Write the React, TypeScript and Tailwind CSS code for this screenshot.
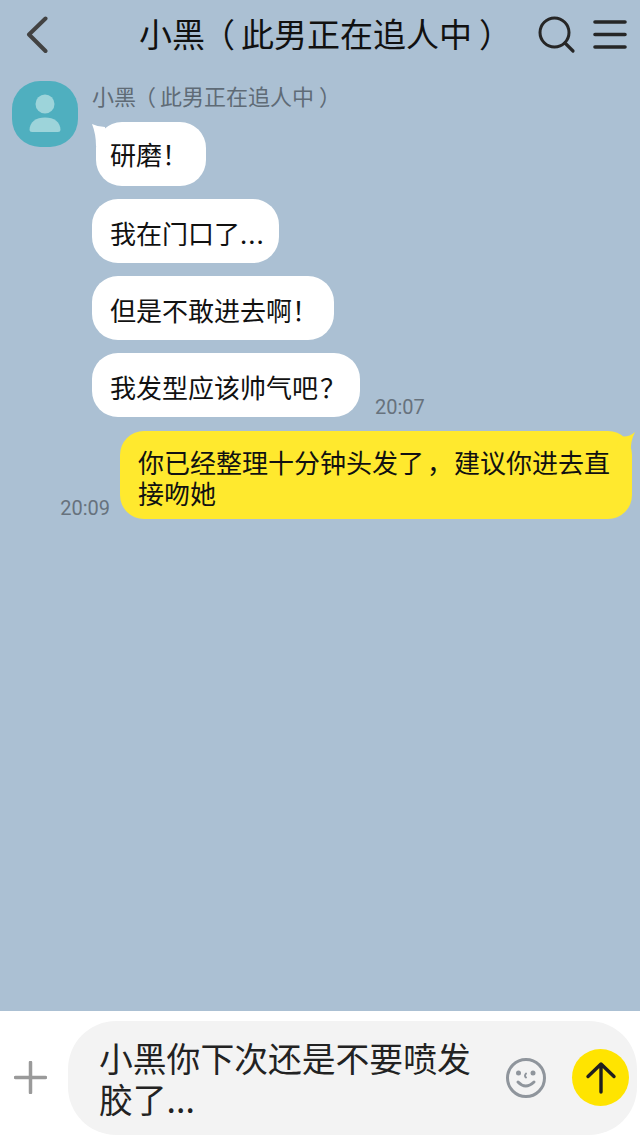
import type { ReactNode } from "react";

const cjk = "font-['Noto_Sans_CJK_SC','Roboto',sans-serif] [text-spacing-trim:space-all]";

const Incoming = ({ children, first, time }: { children: ReactNode; first?: boolean; time?: string }) => (
  <div className="flex items-end">
    <div
      className={
        first
          ? `${cjk} relative ml-1 rounded-[26px] bg-white h-16 pl-[14px] pr-[18px] pb-[2px] flex items-center text-[26px] text-[#111]`
          : `${cjk} relative rounded-[26px] bg-white h-16 pl-[18px] pr-[16px] pt-[2px] flex items-center text-[26px] text-[#111]`
      }
    >
      {first && (
        <svg className="absolute left-[-4px] top-0" width="16" height="26" viewBox="0 0 16 26">
          <path d="M0 2 Q6 5 13 5 L13 24 L4 24 Q4 12 0 2 Z" fill="#fff" />
        </svg>
      )}
      <span className="relative whitespace-nowrap">{children}</span>
    </div>
    {time && <span className="ml-[15px] text-[20px] leading-5 text-[#67727d]">{time}</span>}
  </div>
);

export default function App() {
  return (
    <div className="font-['Roboto','Noto_Sans_CJK_SC',sans-serif] w-[640px] h-[1144px] flex flex-col bg-[#abc0d3] overflow-hidden">
      <header className="h-[70px] shrink-0 flex items-center relative">
        <svg className="ml-[26px]" width="22" height="38" viewBox="0 0 22 38" fill="none">
          <path d="M19.5 2.5 L3 18.5 L19.5 35" stroke="#424242" strokeWidth="4" strokeLinecap="round" strokeLinejoin="round" />
        </svg>
        <h1 className={`${cjk} ml-[91px] pb-[4px] text-[33px] leading-10 font-normal text-[#111] whitespace-nowrap`}>
          小黑<span className="ml-[-3px] mr-[6px]">（</span>此男正在追人中<span className="ml-[7px]">）</span>
        </h1>
        <svg className="absolute left-[538px] top-[16px]" width="38" height="38" viewBox="0 0 38 38" fill="none">
          <circle cx="16.5" cy="16.5" r="14.5" stroke="#262626" strokeWidth="3" />
          <path d="M27 27 L35 35" stroke="#262626" strokeWidth="3.2" strokeLinecap="round" />
        </svg>
        <svg className="absolute left-[593px] top-[19px]" width="34" height="32" viewBox="0 0 34 32" fill="none">
          <path d="M2 3 H32 M2 15.5 H32 M2 28 H32" stroke="#262626" strokeWidth="3.6" strokeLinecap="round" />
        </svg>
      </header>

      <main className="flex-1 flex flex-col px-3 pt-[11px]">
        <div className="flex gap-[14px]">
          <div className="w-[66px] h-[66px] rounded-[28px] bg-[#4fafbf] flex items-center justify-center shrink-0">
            <svg width="36" height="40" viewBox="0 0 36 40">
              <circle cx="18" cy="10" r="9.5" fill="#9dd4da" />
              <path d="M2.5 36 C2.5 28 9 23.500 18 23.500 C27 23.500 33.500 28 33.500 36 Q33.500 38 31 38 H5 Q2.500 38 2.500 36 Z" fill="#9dd4da" />
            </svg>
          </div>
          <div className="flex flex-col">
            <div className={`${cjk} text-[22px] leading-[30px] h-[30px] -mt-[1px] text-[#5f6b76] whitespace-nowrap`}>
              小黑<span className="ml-[-2px] mr-[4px]">（</span>此男正在追人中<span className="ml-[5px]">）</span>
            </div>
            <div className="flex flex-col gap-[13px] mt-[12px]">
              <Incoming first>研磨！</Incoming>
              <Incoming>
                我在门口了<span className="tracking-[1px] -mr-[2px]">...</span>
              </Incoming>
              <Incoming>但是不敢进去啊！</Incoming>
              <Incoming time="20:07">
                我发型应该帅气吧<span className="ml-[2px] -mr-[2px]">？</span>
              </Incoming>
            </div>
          </div>
        </div>

        <div className="flex items-end justify-end mt-[14px] -mr-1">
          <span className="mr-[10px] mb-[1px] text-[20px] leading-5 text-[#67727d]">20:09</span>
          <div className={`${cjk} relative w-[512px] h-[88px] rounded-[24px] bg-[#ffe92e] pl-[18px] pr-[14px] pt-[15px] text-[26px] leading-[31px] text-[#111]`}>
            <svg className="absolute right-[-3px] top-0" width="20" height="24" viewBox="0 0 20 24">
              <path d="M5 5 Q13 7 20 1 Q15 11 16 21 L0 21 Z" fill="#ffe92e" />
            </svg>
            <span className="relative">
              你已经整理十分钟头发了<span className="ml-[3px] mr-[1px]">，</span>建议你进去直接吻她
            </span>
          </div>
        </div>
      </main>

      <footer className="h-[133px] shrink-0 bg-white flex items-center relative">
        <svg className="ml-[14px] shrink-0" width="33" height="33" viewBox="0 0 33 33" fill="none">
          <path d="M16.500 1.500 V31.500 M1.500 16.500 H31.500" stroke="#9a9a9a" strokeWidth="3.500" strokeLinecap="round" />
        </svg>
        <div className="ml-[21px] w-[569px] h-[114px] rounded-[48px] bg-[#f3f3f3] flex items-center pl-[31px] pr-[8px]">
          <div className={`${cjk} w-[379px] text-[33.800px] leading-[41px] text-[#222]`}>小黑你下次还是不要喷发胶了...</div>
          <svg className="ml-[27px] shrink-0" width="42" height="42" viewBox="0 0 42 42" fill="none">
            <circle cx="21" cy="21" r="18.500" stroke="#8f959c" strokeWidth="3" />
            <circle cx="13.500" cy="16" r="2.500" fill="#8f959c" />
            <circle cx="28" cy="16" r="2.500" fill="#8f959c" />
            <path d="M21 16.500 Q19 19 21 20.500" stroke="#8f959c" strokeWidth="2" strokeLinecap="round" />
            <path d="M13 25 Q20.500 33 29 25" stroke="#8f959c" strokeWidth="3" strokeLinecap="round" />
          </svg>
          <div className="ml-[25px] w-[57px] h-[57px] rounded-full bg-[#ffe400] flex items-center justify-center shrink-0">
            <svg width="32" height="34" viewBox="0 0 32 34" fill="none">
              <path d="M16 4 V31 M3 15.500 L16 3 L29 15.500" stroke="#1f1f1f" strokeWidth="3.400" strokeLinecap="round" strokeLinejoin="round" />
            </svg>
          </div>
        </div>
      </footer>
    </div>
  );
}
